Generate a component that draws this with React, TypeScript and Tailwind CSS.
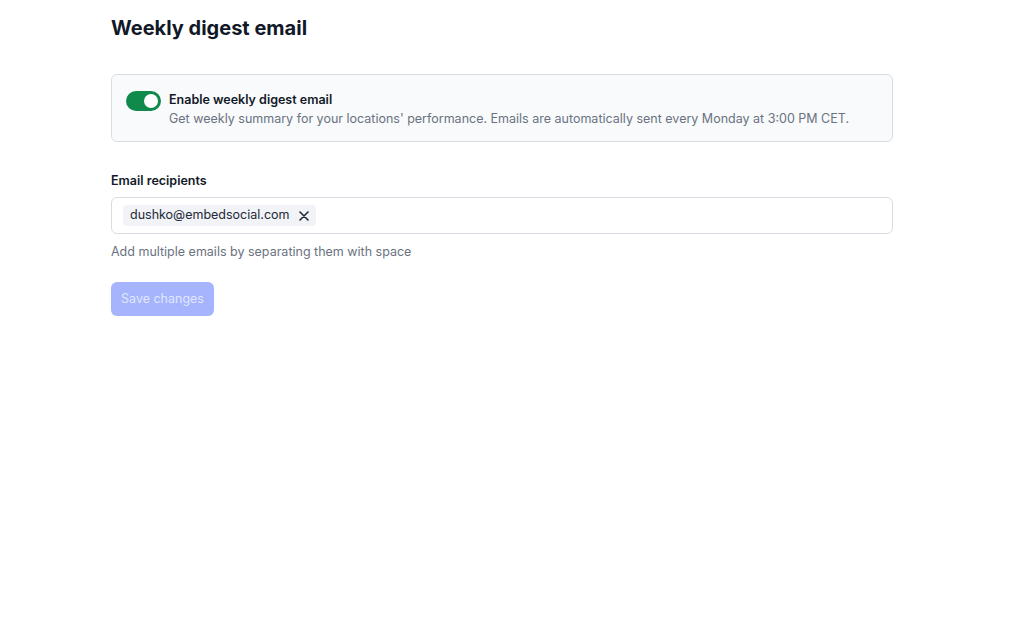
export default function App() {
  return (
    <div className="min-h-[644px] bg-white pl-[111px] pt-[14px] text-[#111827]" style={{ fontFamily: "Inter, 'Noto Sans', sans-serif" }}>
      <div className="w-[782px]">
        <h1 className="text-[20px] font-bold leading-[28px]">Weekly digest email</h1>
        <div className="mt-[32px] flex h-[68px] items-start gap-2 rounded-md border border-[#d9dde3] bg-[#f8fafc] px-[14px] pt-[15px]">
          <div className="mt-[1px] flex h-[20px] w-[35px] items-center rounded-full bg-[#0f8a4a] p-[3px]">
            <div className="ml-auto h-[14px] w-[14px] rounded-full bg-white" />
          </div>
          <div>
            <div className="text-[12.5px] font-semibold leading-[20px]">Enable weekly digest email</div>
            <div className="text-[12.5px] leading-[18px] text-[#6b7280]">Get weekly summary for your locations' performance. Emails are automatically sent every Monday at 3:00 PM CET.</div>
          </div>
        </div>
        <div className="mt-[30px] text-[12.5px] font-semibold leading-[18px]">Email recipients</div>
        <div className="mt-[7px] flex h-[37px] items-center rounded-md border border-[#d9dde3] px-[11px]">
          <div className="flex h-[21px] items-center gap-[9px] rounded bg-[#f1f3f6] px-[7px] text-[12.5px] text-[#1f2937]">
            dushko@embedsocial.com
            <svg width="10" height="10" viewBox="0 0 10 10" stroke="#1f2937" strokeWidth="1.6" strokeLinecap="round"><path d="M1 1L9 9M9 1L1 9" /></svg>
          </div>
        </div>
        <div className="mt-[9px] text-[12.5px] leading-[18px] text-[#6b7280]">Add multiple emails by separating them with space</div>
        <button className="mt-[21px] h-[34px] w-[103px] rounded-md bg-[#a5b4fc] text-[12.5px] text-[#e0e7ff]">Save changes</button>
      </div>
    </div>
  );
}
